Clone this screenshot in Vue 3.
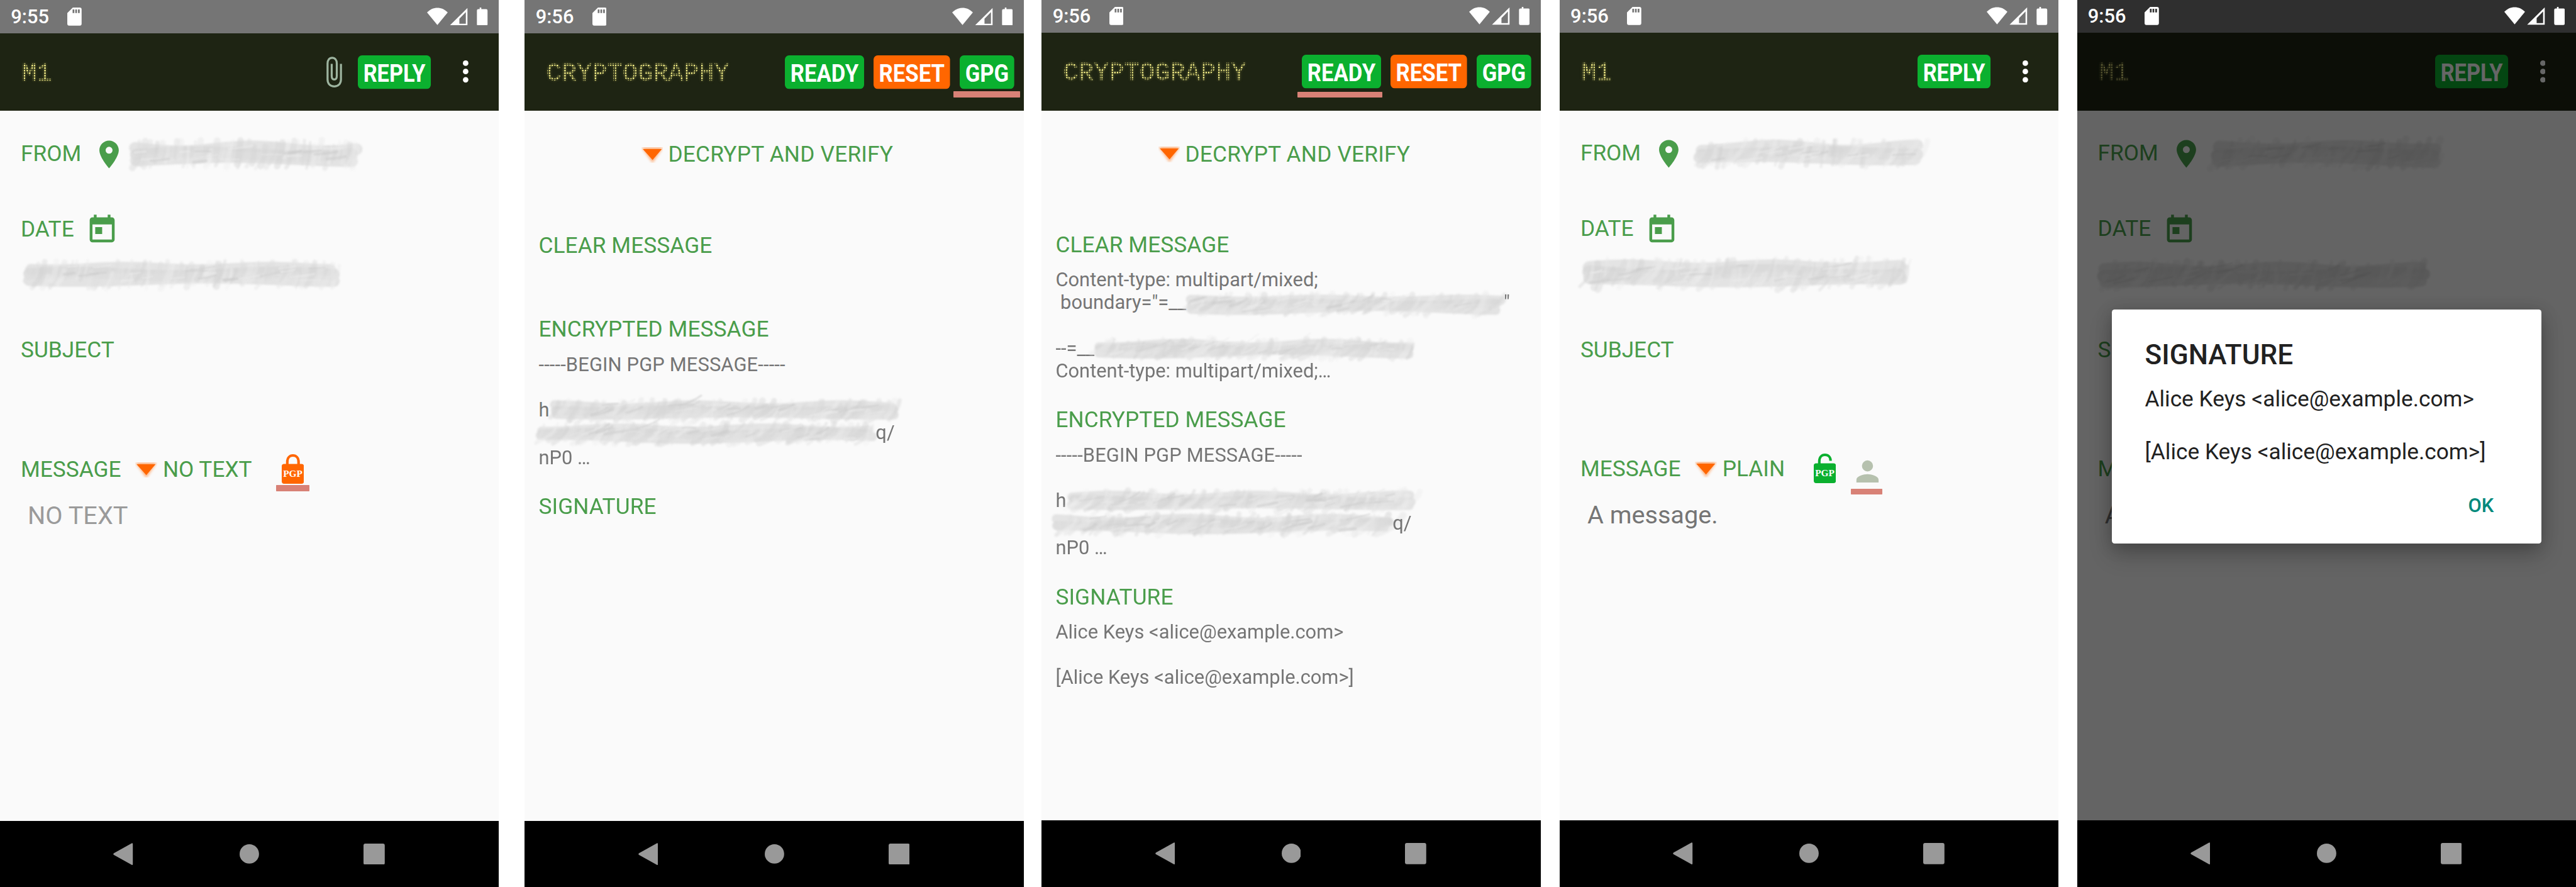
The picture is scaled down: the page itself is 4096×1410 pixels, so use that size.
<script setup>
import { h } from 'vue'

// Lengths are in rem: 1rem stands for 100 device pixels of a phone screen.
const r = (n) => `${n / 100}rem`

function random(seed) {
  let s = seed * 7919 + 17
  return () => {
    s = (s * 16807) % 2147483647
    return s / 2147483647
  }
}

// Smudged brush strokes that hide private data.
function Smudge({ w, h: ht, seed = 1, slant = 0.5 }) {
  const rnd = random(seed)
  rnd(); rnd()
  const soft = []
  const fine = []
  const bandWidth = ht * 0.38
  for (let b = 0; b < 3; b++) {
    const y0 = ht * (0.32 + b * 0.17)
    const amp = ht * (0.04 + rnd() * 0.05)
    const ph = rnd() * 6
    const start = bandWidth * 0.5 + rnd() * 6
    let d = ''
    for (let x = start; x <= w - start; x += 12) {
      const y = y0 + Math.sin(x / (50 + b * 21) + ph) * amp
      d += `${d ? 'L' : 'M'}${x.toFixed(0)} ${y.toFixed(1)}`
    }
    soft.push(h('path', { d, stroke: ['#dfdfdf', '#d9d9d9', '#dedede'][b], 'stroke-width': bandWidth, opacity: 0.85 }))
  }
  const n = Math.round(w / 10)
  for (let i = 0; i < n; i++) {
    const x = 10 + (w - 20) * (i / n) + rnd() * 8
    const len = ht * (0.35 + rnd() * 0.5)
    const y = ht * 0.03 + rnd() * (ht * 0.95 - len)
    const dx = len * slant * (0.2 + rnd() * 1.5)
    const g = Math.round(208 + rnd() * 34)
    soft.push(h('path', {
      d: `M${(x + dx / 2).toFixed(1)} ${y.toFixed(1)}Q${(x + dx * 0.3).toFixed(1)} ${(y + len * 0.6).toFixed(1)} ${(x - dx / 2).toFixed(1)} ${(y + len).toFixed(1)}`,
      stroke: `rgb(${g},${g},${g})`,
      'stroke-width': (4 + rnd() * 11).toFixed(1),
      opacity: 0.42,
    }))
  }
  for (let i = 0; i < w / 30; i++) {
    const x = 12 + rnd() * (w - 80)
    const y = ht * (0.25 + rnd() * 0.55)
    const g = rnd() > 0.5 ? 204 : 236
    const k = 18 + rnd() * 36
    fine.push(h('path', {
      d: `M${x.toFixed(0)} ${y.toFixed(0)}q${(k / 2).toFixed(0)} ${(-k * slant * 0.1).toFixed(0)} ${k.toFixed(0)} ${(-k * slant * rnd() * 0.6).toFixed(0)}`,
      stroke: `rgb(${g},${g},${g})`, 'stroke-width': (2 + rnd() * 4).toFixed(1), opacity: 0.5,
    }))
  }
  const round = { fill: 'none', 'stroke-linecap': 'round', 'stroke-linejoin': 'round' }
  return h('svg', {
    viewBox: `0 0 ${w} ${ht}`,
    style: { width: r(w), height: r(ht), overflow: 'visible', flex: 'none', display: 'block' },
  }, [h('g', { ...round, style: 'filter: blur(2.2px)' }, soft), h('g', { ...round, style: 'filter: blur(1.4px)' }, fine)])
}
Smudge.props = ['w', 'h', 'seed', 'slant']

function Chip({ label, w, tw, tone }) {
  return h('svg', { viewBox: `0 0 ${w} 72.6`, style: { width: r(w), height: r(72.6), display: 'block', overflow: 'visible' } }, [
    h('rect', { width: w, height: 72.6, rx: 9, fill: tone === 'orange' ? '#ff6600' : '#0bb02f' }),
    h('text', {
      x: (w - tw) / 2 - 2, y: 57.6, fill: '#fff', textLength: tw + 4, lengthAdjust: 'spacingAndGlyphs',
      style: 'font: 700 54px Roboto, sans-serif',
    }, label),
  ])
}
Chip.props = ['label', 'w', 'tw', 'tone']

function Caret() {
  return h('svg', { viewBox: '0 0 47 34', style: { width: r(47), height: r(34), display: 'block', flex: 'none' } }, [
    h('path', { d: 'M0 0H47L24 34Z', fill: '#ff6600', opacity: 0.5, style: 'filter: blur(3px)' }),
    h('path', { d: 'M3 4H44L24 27.5Z', fill: '#ff6600', style: 'filter: blur(.7px)' }),
  ])
}

const phones = [
  { time: '9:55', kind: 'mail', clip: true, mode: 'NO TEXT', body: 'NO TEXT',
    from: { x: 279, y: 301, w: 508, h: 66, seed: 3, slant: 0.25 }, date: { x: 49, y: 561, w: 696, h: 66, seed: 5, slant: 0.3 } },
  { time: '9:56', kind: 'crypto', underline: 'gpg' },
  { time: '9:56', kind: 'crypto', underline: 'ready', up: true, clear: true },
  { time: '9:56', kind: 'mail', up: true, plain: true, mode: 'PLAIN', body: 'A message.',
    from: { x: 289, y: 301, w: 506, h: 64, seed: 8, slant: 0.5 }, date: { x: 45, y: 556, w: 719, h: 74, seed: 13, slant: 0.5 } },
  { time: '9:56', kind: 'mail', up: true, plain: true, mode: 'PLAIN', body: 'A message.', dialog: true,
    from: { x: 289, y: 299, w: 504, h: 70, seed: 21, slant: 0.5 }, date: { x: 43, y: 563, w: 724, h: 66, seed: 34, slant: 0.6 } },
]
</script>

<template>
  <main class="board">
    <section v-for="(p, i) in phones" :key="i" class="phone" :class="{ up: p.up }">
      <div class="status" :class="{ dim: p.dialog }">
        <span class="time">{{ p.time }}</span>
        <svg class="sd" viewBox="0 0 31 39">
          <path fill="#fff" d="M12 0H27a4 4 0 0 1 4 4V35a4 4 0 0 1-4 4H4a4 4 0 0 1-4-4V12Z" />
          <path :fill="p.dialog ? '#2f2f2f' : '#757575'" d="M11.5 4h3.7v8h-3.7zM17.3 4H21v8h-3.7zM23.2 4h3.7v8h-3.7z" />
        </svg>
        <svg class="signals" viewBox="0 0 131 39">
          <path fill="#fff" d="M0 10.600C6 4 14 .6 22.400 .6S38.800 4 44.800 10.600L22.400 37.800Z" />
          <path fill="#fff" fill-rule="evenodd" d="M87.500 1V38.500H49.500ZM84 10L70 24V35H84Z" />
          <path fill="#fff" d="M117.500 0v3.500H128a3 3 0 0 1 3 3V36a3 3 0 0 1-3 3h-17a3 3 0 0 1-3-3V6.500a3 3 0 0 1 3-3h3V0Z" />
        </svg>
      </div>

      <div class="window">
        <header class="bar">
          <h1 class="dots"><span>{{ p.kind === 'mail' ? 'M1' : 'CRYPTOGRAPHY' }}</span></h1>
          <div v-if="p.kind === 'mail'" class="actions mail-actions">
            <svg v-if="p.clip" class="clip" viewBox="0 0 34 67">
              <path d="M31.500 15.500V49.500C31.500 59 25.500 64.500 17 64.500S2.500 59 2.500 49.500V15C2.500 7.500 6.500 2.500 12.500 2.500S22.500 7.500 22.500 15V42C22.500 47 20.500 49.500 17 49.500S11.500 47 11.500 42V15.500" fill="none" stroke="#9db49f" stroke-width="4.400" />
            </svg>
            <Chip label="REPLY" :w="158" :tw="130.5" />
            <svg class="more" viewBox="0 0 12 48">
              <circle cx="6" cy="6" r="6" fill="#fff" /><circle cx="6" cy="24" r="6" fill="#fff" /><circle cx="6" cy="42" r="6" fill="#fff" />
            </svg>
          </div>
          <div v-else class="actions crypto-actions">
            <div class="slot"><Chip label="READY" :w="171.5" :tw="143.5" /><i v-if="p.underline === 'ready'" class="mark ready" /></div>
            <div class="slot"><Chip label="RESET" :w="165.5" :tw="138.5" tone="orange" /></div>
            <div class="slot"><Chip label="GPG" :w="118" :tw="90.500" /><i v-if="p.underline === 'gpg'" class="mark gpg" /></div>
          </div>
        </header>

        <div v-if="p.kind === 'mail'" class="mail">
          <div class="field from">
            <span class="label">FROM</span>
            <svg class="icon" viewBox="0 0 24 24"><path fill="currentColor" d="M12 2C8.130 2 5 5.130 5 9c0 5.250 7 13 7 13s7-7.750 7-13c0-3.870-3.130-7-7-7zm0 9.500a2.500 2.500 0 1 1 0-5 2.500 2.500 0 0 1 0 5z" /></svg>
            <Smudge v-bind="{ w: p.from.w, h: p.from.h, seed: p.from.seed, slant: p.from.slant }" :style="{ marginLeft: r(p.from.x - 272.7), marginTop: r(p.from.y - 298) }" />
          </div>
          <div class="field date">
            <span class="label">DATE</span>
            <svg class="icon" viewBox="0 0 24 24"><path fill="currentColor" d="M19 3h-1V1h-2v2H8V1H6v2H5c-1.110 0-1.990.9-1.990 2L3 19a2 2 0 0 0 2 2h14c1.100 0 2-.9 2-2V5c0-1.100-.9-2-2-2zm0 16H5V8h14v11zM7 10h5v5H7z" /></svg>
          </div>
          <div class="stamp">
            <Smudge v-bind="{ w: p.date.w, h: p.date.h, seed: p.date.seed, slant: p.date.slant }" :style="{ marginLeft: r(p.date.x - 45), marginTop: r(p.date.y - 534) }" />
          </div>
          <div class="label subject">SUBJECT</div>
          <div class="message-row">
            <span class="label">MESSAGE</span>
            <Caret class="caret" />
            <span class="label mode" :class="{ short: p.plain }">{{ p.mode }}</span>
            <svg class="lock" viewBox="0 0 48 64">
              <path v-if="p.plain" d="M12 22V17C12 8 17 2.800 24.200 2.800S36.400 8 36.400 15.500" fill="none" stroke="#0bb02f" stroke-width="5.600" />
              <path v-else d="M12 22V17C12 8 17 2.800 24.200 2.800S36.400 8 36.400 17V22" fill="none" stroke="#ff6600" stroke-width="5.600" />
              <rect y="21" width="48" height="43" rx="5" :fill="p.plain ? '#0bb02f' : '#ff6600'" />
              <text x="3" y="49.300" textLength="42" lengthAdjust="spacingAndGlyphs" fill="#fff">PGP</text>
            </svg>
            <svg v-if="p.plain" class="icon person" viewBox="0 0 24 24"><path fill="#b6c1ae" d="M12 12a4 4 0 1 0 0-8 4 4 0 0 0 0 8zm0 2c-2.670 0-8 1.340-8 4v2h16v-2c0-2.660-5.330-4-8-4z" /></svg>
            <i class="mark" :class="p.plain ? 'person-mark' : 'lock-mark'" />
          </div>
          <p class="text" :class="{ hint: !p.plain }">{{ p.body }}</p>
        </div>

        <div v-else class="crypto">
          <div class="select"><Caret class="caret" /><span class="label">DECRYPT AND VERIFY</span></div>
          <h2 class="label">CLEAR MESSAGE</h2>
          <div class="block">
            <template v-if="p.clear">
              <div class="line">Content-type: multipart/mixed;</div>
              <div class="line"><span class="lead"> boundary="=__</span><Smudge :w="698" :h="52" :seed="41" :slant="0.9" class="s1" /><span class="quote">"</span></div>
              <div class="line"></div>
              <div class="line"><span class="lead2">--=__</span><Smudge :w="701" :h="48" :seed="47" :slant="0.9" class="s2" /></div>
              <div class="line">Content-type: multipart/mixed;…</div>
            </template>
            <div v-else class="line"></div>
          </div>
          <h2 class="label">ENCRYPTED MESSAGE</h2>
          <div class="block">
            <div class="line wide">-----BEGIN PGP MESSAGE-----</div>
            <div class="line"></div>
            <div class="line"><span class="h">h</span><Smudge :w="761" :h="50" :seed="p.clear ? 53 : 59" :slant="0.8" class="s3" /></div>
            <div class="line"><Smudge :w="745" :h="50" :seed="p.clear ? 61 : 67" :slant="0.9" class="s4" /><span class="tail">q/</span></div>
            <div class="line last">nP0 …</div>
          </div>
          <h2 class="label">SIGNATURE</h2>
          <div v-if="p.clear" class="block">
            <div class="line">Alice Keys &lt;alice@example.com&gt;</div>
            <div class="line"></div>
            <div class="line">[Alice Keys &lt;alice@example.com&gt;]</div>
          </div>
        </div>

        <div v-if="p.dialog" class="scrim">
          <div class="dialog">
            <h3>SIGNATURE</h3>
            <p>Alice Keys &lt;alice@example.com&gt;</p>
            <p>[Alice Keys &lt;alice@example.com&gt;]</p>
            <button type="button">OK</button>
          </div>
        </div>
      </div>

      <nav class="nav">
        <svg class="back" viewBox="0 0 43 48"><path fill="#999" d="M40 .6Q42.500-.6 42.500 2.500V45.500Q42.500 48.600 40 47.400L1.500 26Q-.8 24 1.500 22Z" /></svg>
        <svg class="home" viewBox="0 0 42 42"><circle cx="21" cy="21" r="21" fill="#999" /></svg>
        <svg class="recent" viewBox="0 0 46 46"><rect width="46" height="46" rx="4" fill="#999" /></svg>
      </nav>
    </section>
  </main>
</template>

<style>
html { font-size: 73.4577px; overflow: hidden; background: #fff; }
body { margin: 0; font-size: 16px; }
</style>

<style scoped>
.board { display: flex; align-items: flex-start; width: 55.76rem; height: 19.2rem; overflow: hidden; background: #fff; font-family: Roboto, sans-serif; }
.phone { flex: none; display: flex; flex-direction: column; width: 10.8rem; height: 19.2rem; margin-right: .56rem; background: #fafafa; }
.phone:nth-child(2) { margin-right: .39rem; }
.phone:nth-child(3) { margin-right: .41rem; }
.phone:nth-child(4) { margin-right: .4rem; }
.phone:nth-child(5) { margin-right: 0; }
.phone.up { margin-top: -.01rem; }
h1, h2, h3, p { margin: 0; font-weight: 400; }

.status { display: flex; height: .72rem; background: #757575; flex: none; }
.status.dim { background: #2f2f2f; }
.time { width: .86rem; margin: .12rem 0 0 .235rem; font-size: .42rem; line-height: .5rem; font-weight: 500; color: #fff; }
.sd { width: .31rem; height: .39rem; margin: .165rem 0 0 .365rem; }
.signals { width: 1.31rem; height: .39rem; margin: .16rem .24rem 0 auto; }

.window { position: relative; flex: 1; display: flex; flex-direction: column; }
.bar { display: flex; height: 1.68rem; background: #1e2413; flex: none; }
.dots { margin: .515rem 0 0 .465rem; height: .72rem; filter: drop-shadow(0 0 2px rgba(226, 218, 100, .5)); }
.dots span {
  display: block; font: 400 .55rem/.72rem "Liberation Mono", monospace; color: #f6f08a;
  -webkit-text-stroke: .3px #f6f08a;
  mask-image: linear-gradient(90deg, #000 60%, transparent 60%), linear-gradient(#000 60%, transparent 60%);
  mask-size: .055rem .055rem; mask-composite: intersect;
}
.actions { display: flex; margin: .472rem 0 0 auto; height: .73rem; }
.clip { width: .34rem; height: .67rem; margin: .035rem .35rem 0 0; }
.more { width: .12rem; height: .48rem; margin: .12rem .66rem 0 .69rem; }
.crypto-actions { gap: .208rem; margin-right: .205rem; }
.slot { position: relative; }
.mark { position: absolute; height: .13rem; background: #d88176; border-radius: .01rem; }
.mark.ready { left: -.09rem; top: .8rem; width: 1.83rem; }
.mark.gpg { left: -.135rem; top: .785rem; width: 1.44rem; }

.label { font-size: .48rem; line-height: .56rem; color: #4a9d4b; white-space: nowrap; }
h2.label { letter-spacing: .001rem; }
.icon { width: .72rem; height: .72rem; flex: none; color: #4a9d4b; }
.mail { padding: .58rem 0 0 .45rem; }
.field { display: flex; height: .72rem; }
.field .label { margin-top: .066rem; }
.from .label { width: 1.557rem; }
.date { margin-top: .92rem; }
.date .label { width: 1.403rem; }
.stamp { display: flex; align-items: flex-start; height: 1.963rem; }
.message-row { position: relative; display: flex; height: .9rem; margin-top: 1.937rem; }
.message-row .label { width: 2.48rem; margin-top: .082rem; }
.message-row .caret { margin-top: .2rem; }
.message-row .mode { width: 2.575rem; margin-left: .125rem; }
.message-row .mode.short { width: 1.972rem; }
.lock { width: .48rem; height: .64rem; margin-top: .03rem; flex: none; }
.lock text { font: 700 20px "Liberation Serif", serif; }
.person { margin: .05rem 0 0 .332rem; }
.lock-mark { left: 5.53rem; top: .7rem; width: .72rem; }
.person-mark { left: 5.86rem; top: .785rem; width: .67rem; }
.text { margin: .151rem 0 0 .15rem; font-size: .54rem; line-height: .633rem; color: #757575; }
.text.hint { color: #9a9a9a; }

.crypto { padding: .66rem 0 0 .3rem; color: #757575; }
.select { display: flex; height: 1.974rem; }
.select .caret { margin: .12rem 0 0 2.22rem; }
.select .label { margin: .01rem 0 0 .115rem; letter-spacing: .0028rem; }
.block { margin: .234rem 0 .534rem; }
.line { display: flex; height: .492rem; font-size: .42rem; line-height: .492rem; white-space: pre; }
.line.wide { letter-spacing: .002rem; }
.line.last { padding-top: .045rem; }
.lead { width: 2.8rem; }
.s1 { margin-top: .015rem; }
.quote { margin-left: -.08rem; }
.lead2 { width: .82rem; }
.s2 { margin-top: .01rem; }
.h { width: .235rem; }
.s3 { margin-top: -.005rem; }
.s4 { margin: .01rem 0 0 -.09rem; }
.tail { margin-left: -.065rem; }

.scrim { position: absolute; inset: 0; background: rgba(0, 0, 0, .6); }
.dialog {
  box-sizing: border-box; display: flex; flex-direction: column; width: 9.3rem; height: 5.06rem; margin: 5.99rem 0 0 .75rem; padding: .63rem .72rem 0;
  background: #fff; border-radius: .06rem; color: #212121;
  box-shadow: 0 .24rem .5rem rgba(0, 0, 0, .2), 0 .06rem .36rem rgba(0, 0, 0, .18);
}
.dialog h3 { font-size: .6rem; line-height: .72rem; font-weight: 500; }
.dialog p { margin: .315rem 0 0; font-size: .48rem; line-height: .57rem; white-space: nowrap; }
.dialog p + p { margin-top: .57rem; }
.dialog button { align-self: flex-end; margin: .62rem .31rem 0 0; padding: 0; border: 0; background: none; font: 500 .42rem/.5rem Roboto, sans-serif; color: #00897b; }

.nav { display: flex; align-items: center; flex: none; height: 1.44rem; background: #000; }
.back { width: .43rem; height: .48rem; margin-left: 2.455rem; }
.home { width: .42rem; height: .42rem; margin-left: 2.305rem; }
.recent { width: .46rem; height: .46rem; margin-left: 2.26rem; }
</style>
